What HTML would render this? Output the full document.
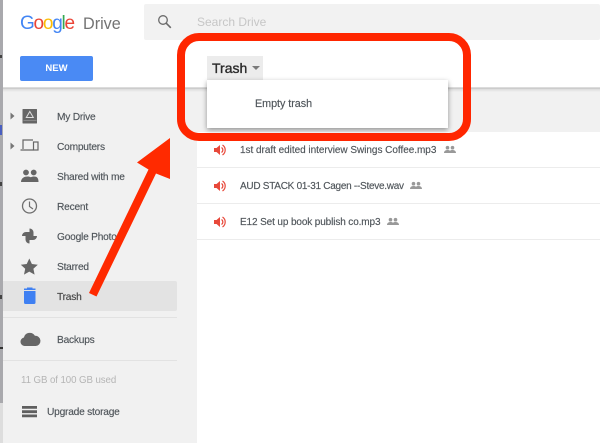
<!DOCTYPE html>
<html><head><meta charset="utf-8">
<style>
html,body{margin:0;padding:0;width:600px;height:443px;overflow:hidden;background:#fff}
body{position:relative;font-family:"Liberation Sans",sans-serif;color:#5a5a5a}
.a{position:absolute}
.t{position:absolute;font-size:10.2px;line-height:14px;white-space:nowrap;color:#4f555a;letter-spacing:-.22px;-webkit-text-stroke:.15px;filter:blur(.3px)}
.s{position:absolute;background:#e2e2e2;height:1px}
svg{filter:blur(.25px)}
</style></head><body>
<div class="a" style="left:0;top:0;width:3px;height:443px;background:#a9a9ad"></div>
<div class="a" style="left:0;top:125px;width:2px;height:10px;background:#4a5fc0"></div>
<div class="a" style="left:0;top:55px;width:2px;height:3px;background:#444"></div>
<div class="a" style="left:0;top:182px;width:2px;height:4px;background:#444"></div>
<div class="a" style="left:0;top:295px;width:2px;height:4px;background:#444"></div>
<div class="a" style="left:0;top:347px;width:3px;height:2px;background:#333"></div>
<div class="a" style="left:0;top:403px;width:3px;height:40px;background:#ddd"></div>

<div class="a" style="left:3px;top:88px;width:194px;height:355px;background:#f1f1f1"></div>
<div class="a" style="left:197px;top:88px;width:403px;height:44px;background:#f1f1f1"></div>
<div class="a" style="left:3px;top:87px;width:597px;height:2px;background:linear-gradient(#e4e4e4,#c4c4c4)"></div>
<div class="a" style="left:3px;top:89px;width:597px;height:3px;background:linear-gradient(#dcdcdc,#f1f1f1)"></div>

<div class="a" style="left:144px;top:4px;width:456px;height:36px;background:#f2f2f2;border-radius:2px"></div>
<svg class="a" style="left:157px;top:14px" width="15" height="15" viewBox="0 0 15 15"><circle cx="6" cy="6" r="4.300" fill="none" stroke="#6b6b6b" stroke-width="1.300"/><path d="M9.200 9.200L13.800 13.800" stroke="#6b6b6b" stroke-width="1.600"/></svg>
<div class="t" style="left:197px;top:15px;font-size:12px;color:#c6c6c6;-webkit-text-stroke:0;letter-spacing:0">Search Drive</div>

<div class="a" style="left:20px;top:13px;font-size:19px;line-height:22px;letter-spacing:-1.250px;white-space:nowrap;filter:blur(.3px)"><span style="color:#4285f4">G</span><span style="color:#ea4335">o</span><span style="color:#fbbc05">o</span><span style="color:#4285f4">g</span><span style="color:#34a853">l</span><span style="color:#ea4335">e</span></div>
<div class="a" style="left:83px;top:13px;font-size:16.200px;line-height:22px;color:#737373;white-space:nowrap;filter:blur(.3px)">Drive</div>

<div class="a" style="left:20px;top:56px;width:73px;height:25px;background:#4a8af4;border-radius:2px;color:#fff;font-size:9.5px;font-weight:bold;line-height:25px;text-align:center">NEW</div>

<div class="a" style="left:3px;top:281px;width:174px;height:30px;background:#e3e3e3;border-radius:0 2px 2px 0"></div>
<div class="s" style="left:3px;top:317px;width:174px"></div>
<div class="s" style="left:3px;top:360px;width:174px"></div>

<svg class="a" style="left:0;top:100px" width="60" height="330" viewBox="0 100 60 330">
<path d="M10.500 112.500l4 3.500-4 3.500zM10.500 142.500l4 3.500-4 3.500z" fill="#777"/>
<path d="M23 109.500h13.500v13.500H23z" fill="#666" stroke="#666" stroke-linejoin="round"/>
<path d="M29.800 111.500l3.500 6h-7z" fill="none" stroke="#ddd" stroke-width="1"/>
<path d="M23.500 120.500h13" stroke="#999" stroke-width=".7"/>
<path d="M23 149v-9h10M20.500 150h13" fill="none" stroke="#666" stroke-width="1.200"/>
<rect x="33.500" y="142" width="4.500" height="8" fill="none" stroke="#666" stroke-width="1.200"/>
<path d="M21 182c0-4 3.500-5.500 6.500-5.500 1.500 0 2.500.3 3.300.8.800-.5 1.900-.8 3.200-.8 3 0 4.500 1.500 4.500 5.500z" fill="#666"/>
<circle cx="26" cy="172.500" r="2.900" fill="#666"/><circle cx="33.700" cy="172.500" r="2.900" fill="#666"/>
<circle cx="29.500" cy="206" r="7" fill="none" stroke="#6e6e6e" stroke-width="1.300"/>
<path d="M29.500 201.500v5l3.500 2.500" fill="none" stroke="#6e6e6e" stroke-width="1.200"/>
<path d="M29.500 236v-7.500a4 4 0 0 1 4 4v3.500zM29.500 236h7.500a4 4 0 0 1-4 4h-3.500zM29.500 236v7.500a4 4 0 0 1-4-4V236zM29.500 236h-7.500a4 4 0 0 1 4-4h3.500z" fill="#666"/>
<path d="M29.300 258.500l2.600 5.500 5.900.7-4.400 4 1.200 5.900-5.300-3-5.300 3 1.200-5.900-4.400-4 5.900-.7z" fill="#666"/>
<path d="M24 291h11.500v11.500a1.500 1.500 0 0 1-1.500 1.500h-8.500a1.500 1.500 0 0 1-1.500-1.500zM24 288.500h11.500v1.500H24zM27 287.500h5.500v1.200H27z" fill="#3f80f2"/>
<path d="M24.500 346a4.300 4.300 0 0 1-.6-8.500 6 6 0 0 1 11-1.700 5.100 5.100 0 0 1 .9 10.200z" fill="#666"/>
<path d="M22 406h15v2.800H22zM22 410.300h15v2.800H22zM22 414.500h15v2.800H22z" fill="#5f5f5f"/>
</svg>

<div class="t" style="left:57px;top:111px">My Drive</div>
<div class="t" style="left:57px;top:141px">Computers</div>
<div class="t" style="left:57px;top:171px">Shared with me</div>
<div class="t" style="left:57px;top:201px">Recent</div>
<div class="t" style="left:57px;top:231px">Google Photos</div>
<div class="t" style="left:57px;top:261px">Starred</div>
<div class="t" style="left:57px;top:291px;color:#444">Trash</div>
<div class="t" style="left:57px;top:334px">Backups</div>
<div class="t" style="left:21px;top:374px;color:#b5b5b5;font-size:9.700px;-webkit-text-stroke:0;letter-spacing:-.08px">11 GB of 100 GB used</div>
<div class="t" style="left:47px;top:406px">Upgrade storage</div>

<div class="s" style="left:197px;top:167px;width:403px;background:#ececec"></div>
<div class="s" style="left:197px;top:203px;width:403px;background:#ececec"></div>
<div class="s" style="left:197px;top:239px;width:403px;background:#ececec"></div>

<svg class="a" style="left:210px;top:141px" width="20" height="90" viewBox="0 0 20 90">
<g fill="#e8483a"><path d="M4 7h2.500L10 4v10L6.500 11H4z"/><path d="M11.500 6.500a3 3 0 0 1 0 5" fill="none" stroke="#e8483a" stroke-width="1.200"/><path d="M12.500 4a6 6 0 0 1 0 10" fill="none" stroke="#e8483a" stroke-width="1.200"/></g>
<g fill="#e8483a" transform="translate(0,36)"><path d="M4 7h2.500L10 4v10L6.500 11H4z"/><path d="M11.500 6.500a3 3 0 0 1 0 5" fill="none" stroke="#e8483a" stroke-width="1.200"/><path d="M12.500 4a6 6 0 0 1 0 10" fill="none" stroke="#e8483a" stroke-width="1.200"/></g>
<g fill="#e8483a" transform="translate(0,72)"><path d="M4 7h2.500L10 4v10L6.500 11H4z"/><path d="M11.500 6.500a3 3 0 0 1 0 5" fill="none" stroke="#e8483a" stroke-width="1.200"/><path d="M12.500 4a6 6 0 0 1 0 10" fill="none" stroke="#e8483a" stroke-width="1.200"/></g>
</svg>
<div class="t" style="left:240px;top:144px;font-size:10px;letter-spacing:-.03px">1st draft edited interview Swings Coffee.mp3</div>
<div class="t" style="left:240px;top:180px;font-size:10px;letter-spacing:-.27px">AUD STACK 01-31 Cagen --Steve.wav</div>
<div class="t" style="left:240px;top:216px;font-size:10px;letter-spacing:-.12px">E12 Set up book publish co.mp3</div>
<svg class="a" style="left:443px;top:145px" width="14" height="10" viewBox="0 0 14 10"><path d="M1 8c0-2 1.600-3 3.500-3 .9 0 1.800.2 2.500.7C7.700 5.200 8.600 5 9.500 5c1.900 0 3.500 1 3.500 3z" fill="#999"/><circle cx="4.500" cy="2.700" r="1.800" fill="#999"/><circle cx="9.500" cy="2.700" r="1.800" fill="#999"/></svg>
<svg class="a" style="left:409px;top:181px" width="14" height="10" viewBox="0 0 14 10"><path d="M1 8c0-2 1.600-3 3.500-3 .9 0 1.800.2 2.500.7C7.700 5.200 8.600 5 9.500 5c1.900 0 3.500 1 3.500 3z" fill="#999"/><circle cx="4.500" cy="2.700" r="1.800" fill="#999"/><circle cx="9.500" cy="2.700" r="1.800" fill="#999"/></svg>
<svg class="a" style="left:386px;top:217px" width="14" height="10" viewBox="0 0 14 10"><path d="M1 8c0-2 1.600-3 3.500-3 .9 0 1.800.2 2.500.7C7.700 5.200 8.600 5 9.500 5c1.900 0 3.500 1 3.500 3z" fill="#999"/><circle cx="4.500" cy="2.700" r="1.800" fill="#999"/><circle cx="9.500" cy="2.700" r="1.800" fill="#999"/></svg>

<div class="a" style="left:207px;top:56px;width:56px;height:24px;background:#ececec"></div>
<div class="a" style="left:212px;top:59px;font-size:14px;line-height:18px;color:#2a2a2a;white-space:nowrap;-webkit-text-stroke:.35px;filter:blur(.25px)">Trash</div>
<div class="a" style="left:252px;top:66px;width:0;height:0;border:4px solid transparent;border-top:4px solid #7a7a7a"></div>
<div class="a" style="left:207px;top:80px;width:241px;height:48px;background:#fff;box-shadow:0 2px 5px rgba(0,0,0,.4)"></div>
<div class="t" style="left:255px;top:97px;font-size:10.800px;letter-spacing:-.05px">Empty trash</div>

<div class="a" style="left:177px;top:33px;width:294px;height:108px;box-sizing:border-box;border:8px solid #ff2600;border-radius:22px"></div>
<svg class="a" style="left:0;top:0;filter:none" width="600" height="443"><path d="M170 138L137 162.500 148.500 169.500 89 293 96.500 296.500 156 173.500 170 179z" fill="#ff2a00"/></svg>
</body></html>
